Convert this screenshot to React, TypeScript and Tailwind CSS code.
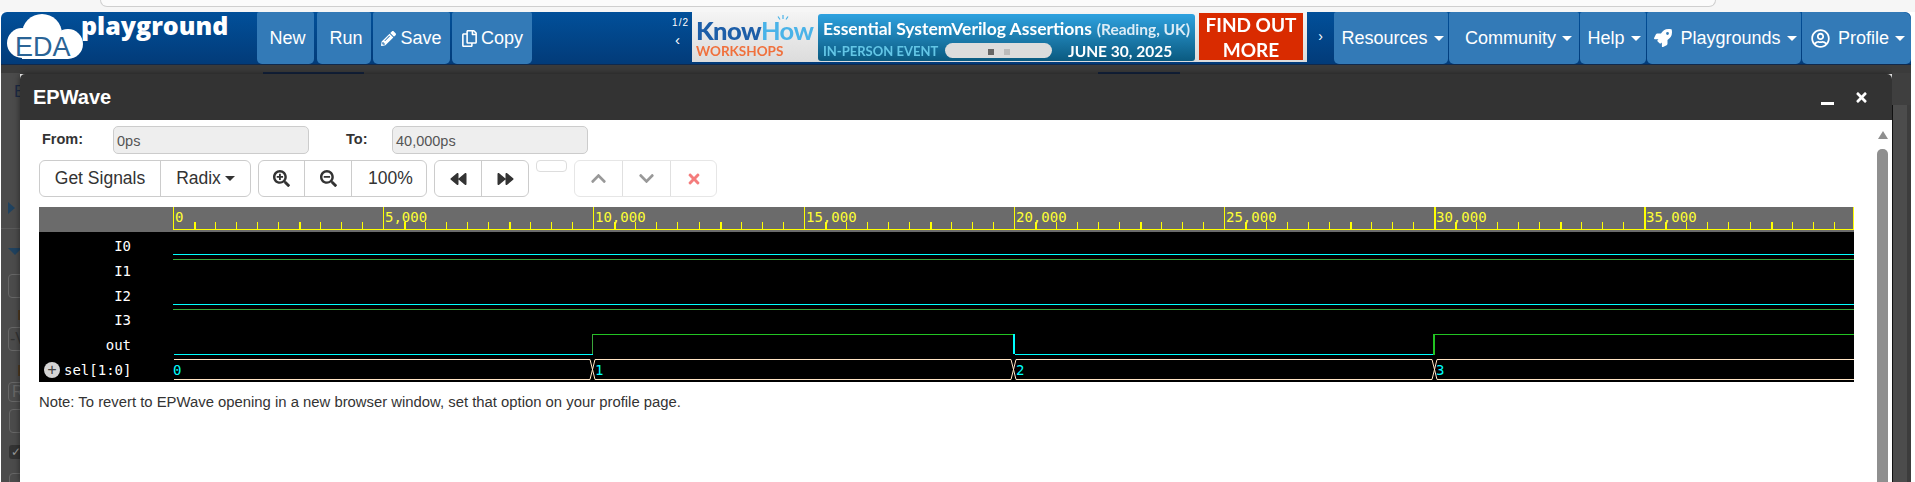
import React from 'react';
import {
  FaPencilAlt, FaRegCopy, FaRocket, FaRegUserCircle, FaSearchPlus, FaSearchMinus,
  FaBackward, FaForward, FaChevronUp, FaChevronDown, FaTimes,
} from 'react-icons/fa';

const MONO = { fontFamily: '"DejaVu Sans Mono", monospace' };

const Caret = () => (
  <span className="ml-[6px] inline-block w-0 h-0 border-x-[5px] border-x-transparent border-t-[5px] border-t-white" />
);

const NavButton = ({ w, children, last }: { w: string; children: React.ReactNode; last?: boolean }) => (
  <button className={`${w} h-[52px] flex items-center justify-center bg-[#337ab7] text-white text-[18px] rounded-b-[5px] ${last ? 'rounded-tr-[8px]' : 'rounded-t-[2px]'}`}>
    {children}
  </button>
);

const Banner = () => (
  <div className="w-[615px] h-[50px] flex bg-gradient-to-b from-[#f4f4f4] to-[#dcdcdc] blur-[0.3px]">
    <div className="w-[126px] pl-[4px] pt-[5px] relative">
      <div className="text-[25.5px] leading-[26px] font-black tracking-[-0.6px] whitespace-nowrap" style={{ fontFamily: 'Lato, sans-serif' }}>
        <span className="text-[#1d5ea8]">Know</span>
        <span className="text-[#4ab3e8] font-bold">How</span>
      </div>
      <div className="text-[13.5px] leading-[14px] mt-[1px] font-bold text-[#f0703c] whitespace-nowrap" style={{ fontFamily: 'Lato, sans-serif' }}>WORKSHOPS</div>
      <svg width="14" height="8" viewBox="0 0 14 8" className="absolute left-[84px] top-[3px]" stroke="#4ab3e8" strokeWidth="1.2">
        <path d="M7 0V4M2 1.5L4 4.5M12 1.5L10 4.5" />
      </svg>
    </div>
    <div className="w-[377px] h-[47px] mt-[1.5px] rounded-[3px] bg-gradient-to-b from-[#2ea2e0] to-[#0a5a80] px-[5px] pt-[5px]" style={{ fontFamily: 'Lato, sans-serif' }}>
      <div className="h-[22px] flex items-baseline text-white whitespace-nowrap font-bold">
        <span className="text-[17.5px] leading-[20px] w-[274px]">Essential SystemVerilog Assertions</span>
        <span className="text-[15.5px] leading-[20px] text-[#dcecf6]">(Reading, UK)</span>
      </div>
      <div className="mt-[1px] flex items-center whitespace-nowrap">
        <span className="w-[122px] text-[13px] leading-[18px] font-bold text-[#63c6e6]">IN-PERSON EVENT</span>
        <span className="w-[107px] h-[15px] rounded-full bg-[#dcdcdc] flex items-center justify-center gap-[10px] pt-[2px]">
          <span className="w-[6px] h-[6px] bg-[#666]" />
          <span className="w-[6px] h-[6px] bg-[#bbb]" />
        </span>
        <span className="ml-[16px] text-[15.5px] leading-[18px] font-bold text-white">JUNE 30, 2025</span>
      </div>
    </div>
    <div className="w-[104px] h-[47px] mt-[1px] ml-[4px] bg-[#d92b00] flex items-center justify-center text-center text-white text-[19px] leading-[25px] font-bold" style={{ fontFamily: 'Lato, sans-serif' }}>
      FIND OUT<br />MORE
    </div>
  </div>
);

const Logo = () => (
  <svg width="90" height="52" viewBox="0 0 90 52" className="ml-[6px] shrink-0">
    <g fill="#fff">
      <circle cx="35" cy="22" r="20" />
      <circle cx="15" cy="31" r="15" />
      <circle cx="61" cy="32" r="15" />
      <rect x="15" y="28" width="46" height="19" />
    </g>
    <text x="8" y="44" fontSize="27" fill="#2a6496" style={{ fontFamily: '"Liberation Sans", sans-serif' }}>EDA</text>
  </svg>
);

const Nav = () => (
  <div className="ml-px w-[1910px] h-[53px] flex rounded-t-[6px] border-b border-[#10294c] bg-gradient-to-b from-[#01509a] to-[#023b79] text-white" style={{ fontFamily: '"Liberation Sans", Arial, sans-serif' }}>
    <div className="w-[256px] flex">
      <Logo />
      <div className="-ml-[16px] mt-[-2px] text-[25px] leading-[30px] font-extrabold whitespace-nowrap" style={{ fontFamily: '"Open Sans", sans-serif' }}>playground</div>
    </div>
    <div className="flex items-start">
      <NavButton w="w-[57px] pl-[4px]">New</NavButton>
      <span className="w-[3px]" />
      <NavButton w="w-[54px] pl-[4px]">Run</NavButton>
      <span className="w-[2px]" />
      <NavButton w="w-[77px]"><FaPencilAlt className="w-[15px] h-[15px] mr-[4px]" />Save</NavButton>
      <span className="w-[2px]" />
      <NavButton w="w-[80px]"><FaRegCopy className="w-[17px] h-[17px] mr-[3px]" />Copy</NavButton>
    </div>
    <div className="w-[160px] flex flex-col items-end pr-[3px] pt-[5px] text-[10px] leading-[12px]">
      <span className="tracking-[1px]">1/2</span>
      <span className="mt-[3px] mr-[9px] text-[15px] leading-[15px]">‹</span>
    </div>
    <Banner />
    <div className="w-[27px] flex items-start justify-center pt-[17px] text-[14px] leading-[14px]">›</div>
    <div className="flex items-start gap-px">
      <NavButton w="w-[114px] pl-[3px]">Resources<Caret /></NavButton>
      <NavButton w="w-[130px] pl-[3px]"><span className="pl-[6px]">Community</span><Caret /></NavButton>
      <NavButton w="w-[66px] pl-[2px]">Help<Caret /></NavButton>
      <NavButton w="w-[154px] pl-[3px]"><FaRocket className="w-[18px] h-[18px] mr-[8px]" />Playgrounds<Caret /></NavButton>
      <NavButton w="w-[109px] pl-[3px]" last><FaRegUserCircle className="w-[19px] h-[19px] mr-[8px]" />Profile<Caret /></NavButton>
    </div>
  </div>
);

// dimmed page that shows behind the modal on the left
const LeftStrip = () => (
  <div className="w-[19px] ml-px bg-[#4b4b4b] overflow-hidden flex flex-col shrink-0 text-[#3a3a3a]" style={{ fontFamily: '"Liberation Sans", sans-serif' }}>
    <div className="h-[8px] bg-[#3b3b3b] shrink-0" />
    <div className="ml-[13px] mt-[9px] h-[20px] text-[17px] leading-[20px] text-[#1d2a44] shrink-0">E</div>
    <div className="h-[100px] shrink-0" />
    <div className="ml-[7px] w-0 h-0 shrink-0 border-y-[6px] border-y-transparent border-l-[7px] border-l-[#20425f]" />
    <div className="mt-[14px] h-px bg-[#5a5a5a] shrink-0" />
    <div className="ml-[7px] mt-[19px] w-0 h-0 shrink-0 border-x-[7px] border-x-transparent border-t-[7px] border-t-[#20425f]" />
    <div className="ml-[7px] mt-[19px] w-[24px] h-[24px] shrink-0 rounded-[4px] border border-[#666]" />
    <div className="ml-[17px] mt-[12px] w-[4px] h-[10px] shrink-0 bg-[#4e3a22]" />
    <div className="ml-[7px] mt-[7px] w-[24px] h-[24px] shrink-0 rounded-[4px] border border-[#666] text-[#333] text-[16px] leading-[22px] pl-[1px]">-V</div>
    <div className="ml-[17px] mt-[14px] w-[4px] h-[11px] shrink-0 bg-[#4e3a22]" />
    <div className="ml-[7px] mt-[6px] w-[24px] h-[20px] shrink-0 rounded-[4px] border border-[#666] text-[#666] text-[16px] leading-[18px] pl-[3px]">R</div>
    <div className="ml-[8px] mt-[7px] w-[22px] h-[24px] shrink-0 rounded-[4px] border border-[#666]" />
    <div className="ml-[8px] mt-[12px] w-[22px] h-[14px] shrink-0 rounded-[3px] bg-[#333] text-[#999] text-[12px] leading-[14px] pl-[2px]">✓</div>
    <div className="ml-[8px] mt-[14px] w-[22px] h-[20px] shrink-0 rounded-[4px] border border-[#666]" />
  </div>
);

const RightStrip = () => (
  <div className="w-[19px] shrink-0 flex flex-col">
    <div className="h-[8px] bg-[#3b3b3b]" />
    <div className="h-[32px] bg-[#3f3f3f]" />
    <div className="flex-1 flex bg-[#4c4c4c]">
      <span className="w-[1px] bg-[#111]" />
      <span className="flex-1" />
      <span className="w-[4px] bg-[#3c3c3c]" />
    </div>
  </div>
);

const Field = ({ label, value, labelW }: { label: string; value: string; labelW: string }) => (
  <div className="flex items-center">
    <label className={`${labelW} text-[14.5px] font-bold text-[#333]`}>{label}</label>
    <div className="w-[196px] h-[28px] bg-[#eee] border border-[#ccc] rounded-[5px] pl-[3px] text-[14.5px] leading-[28px] text-[#555]">{value}</div>
  </div>
);

const Group = ({ children, faded }: { children: React.ReactNode; faded?: boolean }) => (
  <div className={`flex h-[37px] rounded-[6px] border divide-x ${faded ? 'border-[#e6e6e6] divide-[#e0e0e0]' : 'border-[#ccc] divide-[#ccc]'}`}>
    {children}
  </div>
);

const ToolBtn = ({ w, children }: { w: string; children: React.ReactNode }) => (
  <button className={`${w} flex items-center justify-center text-[17.5px] text-[#333]`}>{children}</button>
);

const Toolbar = () => (
  <div className="mt-[6px] flex items-start">
    <Group>
      <ToolBtn w="w-[121px]">Get Signals</ToolBtn>
      <ToolBtn w="w-[89px]">Radix<span className="ml-[4px] w-0 h-0 border-x-[5px] border-x-transparent border-t-[5px] border-t-[#333]" /></ToolBtn>
    </Group>
    <div className="w-[7px]" />
    <Group>
      <ToolBtn w="w-[46px]"><FaSearchPlus className="w-[17px] h-[17px]" /></ToolBtn>
      <ToolBtn w="w-[47px]"><FaSearchMinus className="w-[17px] h-[17px]" /></ToolBtn>
      <ToolBtn w="w-[74px] pl-[3px]">100%</ToolBtn>
    </Group>
    <div className="w-[7px]" />
    <Group>
      <ToolBtn w="w-[47px]"><FaBackward className="w-[19px] h-[16px]" /></ToolBtn>
      <ToolBtn w="w-[46px]"><FaForward className="w-[19px] h-[16px]" /></ToolBtn>
    </Group>
    <div className="ml-[7px] w-[31px] h-[12px] rounded-[4px] border border-[#ddd]" />
    <div className="w-[7px]" />
    <Group faded>
      <ToolBtn w="w-[48px]"><FaChevronUp className="w-[17px] h-[17px] text-[#999]" /></ToolBtn>
      <ToolBtn w="w-[48px]"><FaChevronDown className="w-[17px] h-[17px] text-[#999]" /></ToolBtn>
      <ToolBtn w="w-[45px]"><FaTimes className="w-[14px] h-[16px] text-[#f47c7c]" /></ToolBtn>
    </Group>
  </div>
);

const TICK = 21.02;
const Ruler = () => {
  const ticks = Array.from({ length: 80 }, (_, i) => i);
  return (
    <div className="flex h-[25px] bg-[#6b6b6b]">
      <div className="w-[134px]" />
      <svg width="1681" height="25" className="block" style={MONO}>
        <rect x="0" y="22" width="1681" height="1" fill="#ffff00" />
        <rect x="1680" y="0" width="1" height="22" fill="#ffff00" />
        {ticks.map((i) => {
          const x = Math.round(i * TICK);
          if (i % 10 === 0) return <rect key={i} x={x} y="0" width={i >= 60 ? 2 : 1} height="22" fill="#ffff00" />;
          return <rect key={i} x={x} y="15" width={i % 5 === 1 ? 2 : 1} height="7" fill="#ffff00" />;
        })}
        {[0, 5, 10, 15, 20, 25, 30, 35].map((k, n) => (
          <text key={k} x={Math.round(n * 2 * 5 * TICK) + 2} y="15" fontSize="14" fill="#ffff33">
            {k === 0 ? '0' : `${k},000`}
          </text>
        ))}
      </svg>
    </div>
  );
};

const CYAN = '#00ffff';
const DIM_GREEN = '#3aa63a';
const GREEN = '#22c322';
const BISQUE = '#ffe4c4';

// the sel bus: two rails between transitions, a narrow cross at each transition
const BUS_EDGES = [419.5, 840.5, 1261.5];

// x positions below are relative to the start of the trace area (x=173)
const Traces = () => (
  <svg width="1681" height="150" className="block" style={MONO}>
    <rect x="0" y="22" width="1681" height="1" fill={CYAN} />
    <rect x="0" y="27" width="1681" height="1" fill={DIM_GREEN} />
    <rect x="0" y="72" width="1681" height="1" fill={CYAN} />
    <rect x="0" y="77" width="1681" height="1" fill={DIM_GREEN} />

    <rect x="1" y="122" width="419" height="1" fill={CYAN} />
    <rect x="419" y="102" width="1" height="20" fill={DIM_GREEN} />
    <rect x="420" y="102" width="421" height="1" fill={GREEN} />
    <rect x="840" y="102" width="2" height="20" fill={CYAN} />
    <rect x="842" y="122" width="419" height="1" fill={CYAN} />
    <rect x="1260" y="102" width="2" height="21" fill={GREEN} />
    <rect x="1262" y="102" width="419" height="1" fill={GREEN} />

    <g fill="none" stroke={BISQUE} strokeWidth="1">
      <path d="M1 127.5H417M1 147.5H417M422 127.5H838M422 147.5H838M843 127.5H1259M843 147.5H1259M1264 127.5H1681M1264 147.5H1681" />
      {BUS_EDGES.map((x) => (
        <path key={x} d={`M${x - 2.5} 127.5L${x + 2.5} 147.5M${x + 2.5} 127.5L${x - 2.5} 147.5`} />
      ))}
    </g>
    <text x="0" y="143" fontSize="14" fill={CYAN}>0</text>
    <text x="422" y="143" fontSize="14" fill={CYAN}>1</text>
    <text x="843" y="143" fontSize="14" fill={CYAN}>2</text>
    <text x="1263" y="143" fontSize="14" fill={CYAN}>3</text>
  </svg>
);

const SIGNALS = ['I0', 'I1', 'I2', 'I3', 'out'];

const WaveView = () => (
  <div className="mt-[10px] w-[1815px]">
    <Ruler />
    <div className="flex h-[150px] bg-black text-white text-[14px]" style={MONO}>
      <div className="w-[134px] flex flex-col pt-[2px]">
        {SIGNALS.map((s) => (
          <div key={s} className="h-[25px] leading-[24px] text-right pr-[42px]">{s}</div>
        ))}
        <div className="h-[24px] flex items-center pl-[5px]">
          <span className="w-[16px] h-[16px] mr-[4px] rounded-full bg-[#d4d4d4] text-[#444] flex items-center justify-center text-[15px] leading-none">+</span>
          sel[1:0]
        </div>
      </div>
      <Traces />
    </div>
  </div>
);

const Modal = () => (
  <div className="flex-1 flex flex-col rounded-t-[5px] shadow-[0_0_6px_rgba(0,0,0,0.5)] overflow-hidden" style={{ fontFamily: '"Liberation Sans", Arial, sans-serif' }}>
    <div className="h-[46px] shrink-0 bg-[#333] flex items-center justify-between text-white pl-[13px]">
      <span className="text-[20px] font-bold">EPWave</span>
      <div className="flex items-center pr-[24px]">
        <span className="w-[13px] h-[3px] bg-white mt-[12px] mr-[21px]" />
        <FaTimes className="w-[13px] h-[15px]" />
      </div>
    </div>
    <div className="flex-1 bg-white flex">
      <div className="w-[1857px] pl-[19px] pt-[6px]">
        <div className="flex">
          <Field label="From:" value="0ps" labelW="w-[74px] pl-[3px]" />
          <div className="w-[37px]" />
          <Field label="To:" value="40,000ps" labelW="w-[46px]" />
        </div>
        <Toolbar />
        <WaveView />
        <p className="mt-[10px] text-[14.85px] leading-[20px] text-[#333]">
          Note: To revert to EPWave opening in a new browser window, set that option on your profile page.
        </p>
      </div>
      <div className="w-[11px] flex flex-col items-center">
        <span className="mt-[11px] w-0 h-0 border-x-[5.5px] border-x-transparent border-b-[8px] border-b-[#8f8f8f]" />
        <span className="mt-[10px] w-[11px] flex-1 bg-[#8f8f8f] rounded-t-[5px]" />
      </div>
    </div>
  </div>
);

export default function App() {
  return (
    <div className="w-[1915px] h-[482px] overflow-hidden bg-white flex flex-col">
      <div className="h-[12px] bg-[#f6f6f6] shrink-0">
        <div className="ml-[100px] w-[1616px] h-[7px] bg-[#fbfbfb] border-x border-b border-[#cfcfcf] rounded-b-[10px]" />
      </div>
      <Nav />
      <div className="flex-1 flex min-h-0">
        <LeftStrip />
        <div className="w-[1872px] flex flex-col min-h-0">
          <div className="h-[9px] shrink-0 bg-[#3b3b3b] flex items-end">
            <span className="ml-[243px] w-[101px] h-[2px] bg-[#14233f]" />
            <span className="ml-[734px] w-[82px] h-[2px] bg-[#14233f]" />
          </div>
          <Modal />
        </div>
        <RightStrip />
      </div>
    </div>
  );
}
